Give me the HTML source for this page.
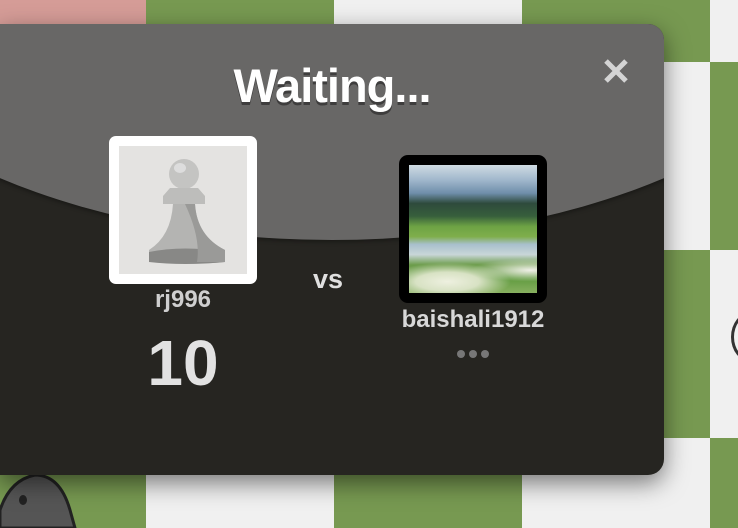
<!DOCTYPE html>
<html><head><style>
*{margin:0;padding:0;box-sizing:border-box}
body{width:738px;height:528px;overflow:hidden;position:relative;background:#eeeed2;font-family:"Liberation Sans",Arial,sans-serif}
.sq{position:absolute}
.g{background:#779951}.w{background:#f0f0f0}.p{background:#d59c97}
#modal{position:absolute;left:0;top:24px;width:664px;height:451px;border-radius:0 16px 16px 0;background:#262521;overflow:hidden;box-shadow:0 8px 24px rgba(0,0,0,.5)}
#ell{position:absolute;left:-200px;top:-350px;width:1064px;height:566px;border-radius:50%;background:#686766;box-shadow:0 2px 4px rgba(0,0,0,.35)}
.t{position:absolute;text-align:center;font-weight:bold}
</style></head><body>
<div class="sq p" style="left:0;top:0;width:146px;height:62px"></div>
<div class="sq g" style="left:146px;top:0;width:188px;height:62px"></div>
<div class="sq w" style="left:334px;top:0;width:188px;height:62px"></div>
<div class="sq g" style="left:522px;top:0;width:188px;height:62px"></div>
<div class="sq w" style="left:710px;top:0;width:28px;height:62px"></div>
<div class="sq w" style="left:522px;top:62px;width:188px;height:188px"></div>
<div class="sq g" style="left:710px;top:62px;width:28px;height:188px"></div>
<div class="sq g" style="left:522px;top:250px;width:188px;height:188px"></div>
<div class="sq w" style="left:710px;top:250px;width:28px;height:188px"></div>
<div class="sq g" style="left:0;top:438px;width:146px;height:90px"></div>
<div class="sq w" style="left:146px;top:438px;width:188px;height:90px"></div>
<div class="sq g" style="left:334px;top:438px;width:188px;height:90px"></div>
<div class="sq w" style="left:522px;top:438px;width:188px;height:90px"></div>
<div class="sq g" style="left:710px;top:438px;width:28px;height:90px"></div>
<div style="position:absolute;left:731px;top:312px;width:40px;height:50px;border:3px solid #333;border-radius:50%"></div>
<svg style="position:absolute;left:0;top:470px" width="80" height="58"><path d="M0 40 Q10 10 35 5 Q60 5 70 40 L75 58 L0 58Z" fill="#555" stroke="#222" stroke-width="3"/><ellipse cx="23" cy="30" rx="4" ry="5" fill="#222"/></svg>

<div id="modal">
<div id="ell"></div>
<div class="t" style="left:0;width:664px;top:34px;font-size:47px;color:#fff;text-shadow:0 3px 0 rgba(0,0,0,.4);letter-spacing:-1px">Waiting...</div>
<svg style="position:absolute;left:603px;top:34px" width="26" height="26"><path d="M3 3L23 23M23 3L3 23" stroke="#d4d4d4" stroke-width="5"/></svg>

<div style="position:absolute;left:109px;top:112px;width:148px;height:148px;background:#fff;border-radius:7px;padding:10px 10px">
<div style="width:128px;height:128px;background:#e4e3e1;position:relative">
<svg width="128" height="128" viewBox="0 0 128 128"><circle cx="65" cy="28" r="15" fill="#c4c4c2"/><ellipse cx="61" cy="22" rx="6" ry="5" fill="#ddd"/><path d="M44 50 L51 42 H79 L86 50 V58 H44Z" fill="#bdbdbb"/><path d="M54 58 H76 Q78 90 106 104 V116 Q65 120 30 114 V104 Q52 90 54 58Z" fill="#b4b4b2"/><path d="M30 106 Q65 99 106 106 V116 Q65 120 30 116Z" fill="#888886"/><path d="M66 58 H76 Q78 90 106 104 V116 H78 Q82 92 66 58Z" fill="#9a9a98"/></svg>
</div></div>
<div class="t" style="left:89px;width:188px;top:262px;font-size:24px;color:#cfcfcf">rj996</div>
<div class="t" style="left:89px;width:188px;top:302px;font-size:64px;color:#e2e2e2">10</div>
<div class="t" style="left:288px;width:80px;top:240px;font-size:27px;color:#e0e0e0">vs</div>

<div style="position:absolute;left:399px;top:131px;width:148px;height:148px;background:#000;border-radius:9px;padding:10px">
<div style="width:128px;height:128px;position:relative;overflow:hidden;background:linear-gradient(180deg,#cfdbe3 0%,#9fb6cb 12%,#6f8eaa 22%,#2e4a3c 30%,#375f3c 40%,#6da344 48%,#7fae4c 56%,#a8c0cc 62%,#c9d6d8 70%,#6d9d4c 78%,#5f9a3e 88%,#88b060 100%)">
<div style="position:absolute;left:0;top:90px;width:128px;height:38px;background:radial-gradient(ellipse at 30% 70%,#eef0e0 0,#d8e2c4 25%,transparent 50%),radial-gradient(ellipse at 95% 40%,#f0f0e8 0,transparent 35%)"></div>
</div></div>
<div class="t" style="left:370px;width:206px;top:282px;font-size:24px;color:#d8d8d8">baishali1912</div>
<div style="position:absolute;left:457px;top:321px"><span style="display:inline-block;width:8px;height:8px;border-radius:50%;background:#777;margin-right:4px"></span><span style="display:inline-block;width:8px;height:8px;border-radius:50%;background:#777;margin-right:4px"></span><span style="display:inline-block;width:8px;height:8px;border-radius:50%;background:#777"></span></div>
</div>
</body></html>
